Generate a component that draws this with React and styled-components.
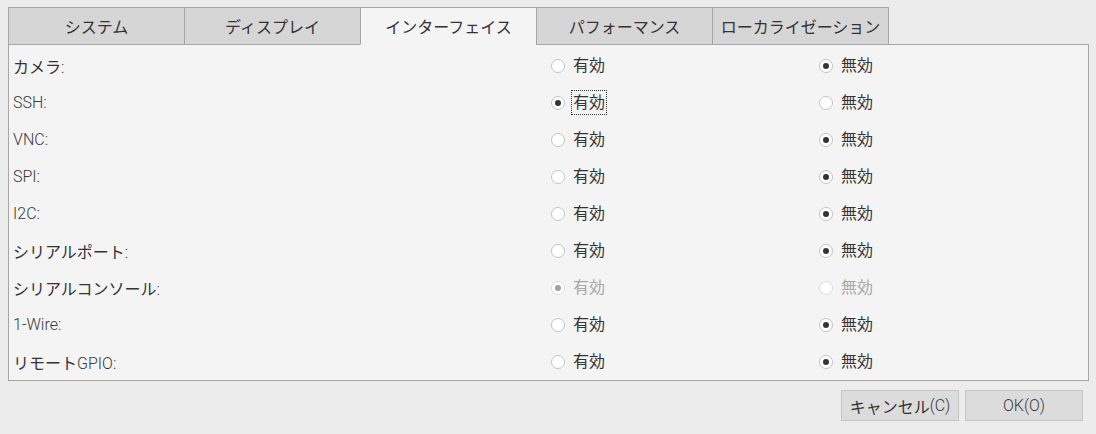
import React from "react";
import styled, { createGlobalStyle } from "styled-components";

const GlobalStyle = createGlobalStyle`
  html, body {
    margin: 0;
    padding: 0;
    background: #ececec;
  }
  body {
    font-family: Roboto, "Noto Sans CJK JP", sans-serif;
    font-size: 16px;
    color: #333;
  }
`;

const Window = styled.div`
  width: 1096px;
  height: 434px;
  box-sizing: border-box;
  padding: 7px 7px 0 8px;
  display: flex;
  flex-direction: column;
`;

const TabBar = styled.div`
  display: flex;
  position: relative;
  z-index: 1;
  margin-bottom: -1px;
`;

const Tab = styled.div`
  width: 177px;
  height: 38px;
  box-sizing: border-box;
  display: flex;
  align-items: center;
  justify-content: center;
  font-size: 16px;
  color: #333;
  background: ${props => (props.active ? "#f4f4f4" : "#d6d6d6")};
  border: 1px solid #a6a6a6;
  border-bottom-color: ${props => (props.active ? "#f4f4f4" : "#a6a6a6")};
  & + & {
    margin-left: -1px;
  }
`;

const Panel = styled.div`
  background: #f4f4f4;
  border: 1px solid #a6a6a6;
  padding: 2px 0 0 4px;
  height: 337px;
  box-sizing: border-box;
`;

const Row = styled.div`
  display: grid;
  grid-template-columns: 538px 268px 1fr;
  align-items: center;
  height: 37px;
`;

const Label = styled.div`
  font-size: 16px;
  color: #333;
`;

// latin runs in the reference are drawn thinner than the kana
const Latin = styled.span`
  font-weight: 300;
  color: #3a3a3a;
`;

const Option = styled.label`
  display: flex;
  align-items: center;
  gap: 6px;
  font-size: 16px;
  color: ${props => (props.disabled ? "#a8a8a8" : "#333")};
`;

const Circle = styled.span`
  width: 14px;
  height: 14px;
  box-sizing: border-box;
  border-radius: 50%;
  background: #fff;
  border: 1px solid ${props => (props.disabled ? "#dcdcdc" : "#c4c4c4")};
  display: flex;
  align-items: center;
  justify-content: center;
  &::after {
    content: "";
    width: 6px;
    height: 6px;
    border-radius: 50%;
    background: ${props => (props.disabled ? "#a0a0a0" : "#333")};
    display: ${props => (props.checked ? "block" : "none")};
  }
`;

const OptionText = styled.span`
  padding: 3px 1px;
  border: 1px dotted ${props => (props.focused ? "#333" : "transparent")};
  line-height: 17px;
`;

const Footer = styled.div`
  display: flex;
  justify-content: flex-end;
  gap: 6px;
  padding: 9px 6px 0 0;
`;

const Button = styled.div`
  width: 118px;
  height: 31px;
  box-sizing: border-box;
  background: #dcdcdc;
  border: 1px solid #c6c6c6;
  display: flex;
  align-items: center;
  justify-content: center;
  font-size: 16px;
  color: #333;
`;

const tabs = ["システム", "ディスプレイ", "インターフェイス", "パフォーマンス", "ローカライゼーション"];

const rows = [
  { label: "カメラ:", on: false },
  { label: "SSH:", on: true, focused: true },
  { label: "VNC:", on: false },
  { label: "SPI:", on: false },
  { label: "I2C:", on: false },
  { label: "シリアルポート:", on: false },
  { label: "シリアルコンソール:", on: true, disabled: true },
  { label: "1-Wire:", on: false },
  { label: "リモートGPIO:", on: false }
];

const Mixed = ({ text }) =>
  text
    .split(/([\x20-\x7e]+)/)
    .filter(Boolean)
    .map((part, i) =>
      /^[\x20-\x7e]+$/.test(part) ? <Latin key={i}>{part}</Latin> : <span key={i}>{part}</span>
    );

const Radio = ({ checked, disabled, focused, children }) => (
  <Option disabled={disabled}>
    <Circle checked={checked} disabled={disabled} />
    <OptionText focused={focused}>{children}</OptionText>
  </Option>
);

const App = () => (
  <Window>
    <GlobalStyle />
    <TabBar>
      {tabs.map((t, i) => (
        <Tab key={t} active={i === 2}>
          {t}
        </Tab>
      ))}
    </TabBar>
    <Panel>
      {rows.map(r => (
        <Row key={r.label}>
          <Label>
            <Mixed text={r.label} />
          </Label>
          <Radio checked={r.on} disabled={r.disabled} focused={r.focused}>
            有効
          </Radio>
          <Radio checked={!r.on} disabled={r.disabled}>
            無効
          </Radio>
        </Row>
      ))}
    </Panel>
    <Footer>
      <Button>
        <Mixed text="キャンセル(C)" />
      </Button>
      <Button>
        <Mixed text="OK(O)" />
      </Button>
    </Footer>
  </Window>
);

export default App;
